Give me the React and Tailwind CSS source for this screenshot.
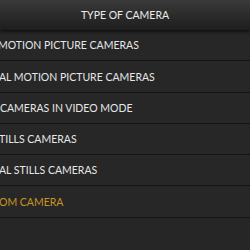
export default function App() {
  const rows = [
    { t: "MOTION PICTURE CAMERAS", ml: "-ml-[2px]", h: "h-[31px]" },
    { t: "AL MOTION PICTURE CAMERAS", ml: "-ml-[1px]", h: "h-[32px]" },
    { t: "CAMERAS IN VIDEO MODE", ml: "ml-0", h: "h-[31px]" },
    { t: "TILLS CAMERAS", ml: "-ml-[1px]", h: "h-[31px]" },
    { t: "AL STILLS CAMERAS", ml: "-ml-[1px]", h: "h-[31px]" },
    { t: "OM CAMERA", ml: "-ml-[1px]", gold: true, h: "h-[32px]" },
  ];
  return (
    <div className="w-[250px] h-[250px] overflow-hidden bg-[#262626] flex flex-col" style={{ fontFamily: '"Lato", "Open Sans", sans-serif' }}>
      <div className="h-[30px] shrink-0 flex items-center justify-center bg-gradient-to-b from-[#3a3a3a] to-[#1e1e1e] shadow-[0_2px_3px_rgba(0,0,0,0.6)] relative z-10">
        <span className="text-[10.5px] text-[#ececec] pt-[1px]">TYPE OF CAMERA</span>
      </div>
      {rows.map((r, i) => (
        <div key={i} className={`${r.h} shrink-0 flex items-center pt-[2px] border-b border-[#141414] shadow-[0_1px_0_#333333] bg-[#272727]`}>
          <span className={`${r.ml} whitespace-nowrap text-[10.5px] ${r.gold ? "text-[#c7951f]" : "text-[#e6e6e6]"}`}>{r.t}</span>
        </div>
      ))}
      <div className="flex-1 bg-[#262626]" />
    </div>
  );
}
